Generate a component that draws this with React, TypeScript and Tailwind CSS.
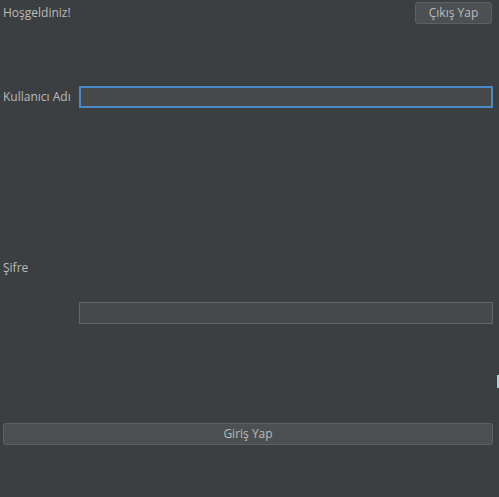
export default function App() {
  return (
    <div className="relative w-[499px] h-[497px] bg-[#3c3f41] text-[#bbbbbb] text-[12px] overflow-hidden" style={{ fontFamily: '"Open Sans", "DejaVu Sans", sans-serif' }}>
      <div className="flex flex-col">
        <div className="flex items-center justify-between h-[26px] pl-[3px] pr-[7px]">
          <span>Hoşgeldiniz!</span>
          <button className="w-[77px] h-[22px] rounded-[3px] border border-[#5e6060] bg-[#4c5052] text-[#bbbbbb]">Çıkış Yap</button>
        </div>

        <div className="flex items-center mt-[60px] h-[22px] pl-[3px] pr-[6px]">
          <span className="w-[76px]">Kullanıcı Adı</span>
          <div className="flex-1 h-[22px] border-2 border-[#4a88c7] bg-[#45494a]" />
        </div>

        <div className="mt-[153px] pl-[3px] h-[14px] leading-[14px]">Şifre</div>

        <div className="mt-[27px] h-[22px] pl-[79px] pr-[6px] flex">
          <div className="flex-1 border border-[#646464] bg-[#45494a]" />
        </div>

        <div className="mt-[99px] h-[22px] pl-[3px] pr-[6px] flex">
          <button className="flex-1 rounded-[3px] border border-[#5e6060] bg-[#4c5052] text-[#bbbbbb]">Giriş Yap</button>
        </div>
      </div>
      <div className="absolute right-0 top-[375px] w-[2px] h-[13px] bg-[#a8d4d6]" />
    </div>
  );
}
